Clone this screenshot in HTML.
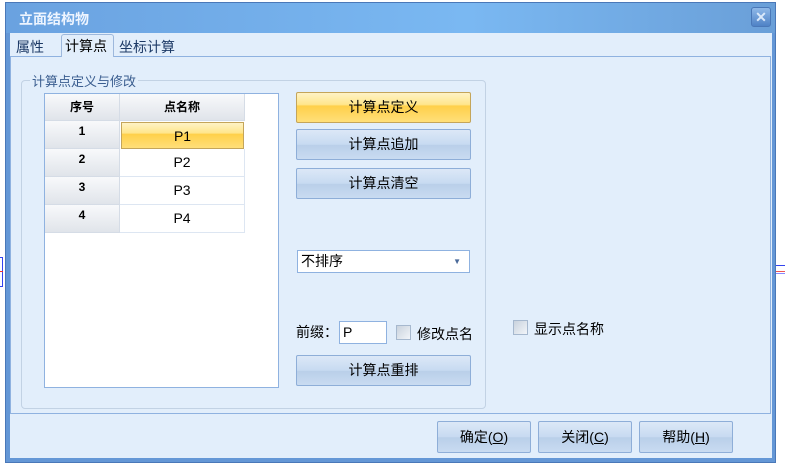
<!DOCTYPE html>
<html><head><meta charset="utf-8"><style>
*{margin:0;padding:0;box-sizing:border-box}
body{width:785px;height:465px;background:#fff;position:relative;overflow:hidden;font-family:"Liberation Sans","Noto Sans CJK SC",sans-serif;font-size:14px;color:#000}
.a{position:absolute}
.win{left:5px;top:2px;width:771px;height:461px;border:1px solid #4a78b8;background:#6497d6}
.title{left:6px;top:3px;width:769px;height:30px;background:linear-gradient(90deg,#6aa2e0,#7ab8f2 60%,#6a9fd8);color:#eef5ff;font-weight:bold;font-size:14px;padding:6px 0 0 13px}
.client{left:10px;top:33px;width:762px;height:425px;background:#e2eefb}
.btn{border:1px solid #8eaed8;border-radius:2px;background:linear-gradient(#dce8f7,#c7daf1 50%,#b9cfe9 52%,#c9dbf1);text-align:center;font-size:14px}
.btny{border-color:#c4a55a;background:linear-gradient(#fff3c6,#ffe68c 40%,#ffd04a 45%,#ffdf7a)}
.hd{background:linear-gradient(#f8f9fb,#e0e4ea);border-right:1px solid #d5dce6;border-bottom:1px solid #d5dce6;font-weight:bold;font-size:12px;text-align:center}
.cell{background:#fff;border-right:1px solid #dde6f2;border-bottom:1px solid #dde6f2;text-align:center;font-size:14px}
.cb{width:15px;height:15px;border:1px solid #a6b8ce;background:linear-gradient(135deg,#c9d2dd,#f2f5f9)}
</style></head><body>
<div class="a" style="left:0;top:257px;width:3px;height:30px;border:1px solid #3344ee;border-left:none"></div>
<div class="a" style="left:0;top:271px;width:3px;height:1px;background:#e33"></div>
<div class="a" style="left:776px;top:265px;width:9px;height:1px;background:#3344ee"></div>
<div class="a" style="left:776px;top:271px;width:9px;height:1px;background:#e55"></div>
<div class="a" style="left:776px;top:273px;width:9px;height:1px;background:#88f"></div>
<div class="a win"></div>
<div class="a title">立面结构物</div>
<div class="a" style="left:751px;top:7px;width:20px;height:20px;border-radius:3px;background:linear-gradient(#8fb8e8,#4f82c6);border:1px solid #4a78b8;color:#dbe9fa;font-weight:bold;font-size:14px;text-align:center;line-height:18px">✕</div>
<div class="a client"></div>
<div class="a" style="left:10px;top:56px;width:761px;height:358px;border:1px solid #8fb2e0;background:#e2eefb"></div>
<div class="a" style="left:16px;top:37px;font-size:14px;color:#1d3a66">属性</div>
<div class="a" style="left:61px;top:34px;width:53px;height:23px;border:1px solid #9db8dc;border-bottom:none;border-radius:3px 3px 0 0;background:#e2eefb"></div>
<div class="a" style="left:65px;top:36px;font-size:14px">计算点</div>
<div class="a" style="left:119px;top:37px;font-size:14px;color:#1d3a66">坐标计算</div>
<div class="a" style="left:21px;top:80px;width:465px;height:329px;border:1px solid #c2d2e4;border-radius:4px"></div>
<div class="a" style="left:30px;top:71px;padding:0 2px;background:#e2eefb;color:#3a5d8f;font-size:13px">计算点定义与修改</div>
<div class="a" style="left:44px;top:93px;width:235px;height:295px;border:1px solid #8fb2e0;background:#fff"></div>
<div class="a hd" style="left:45px;top:94px;width:75px;height:27px;line-height:26px">序号</div>
<div class="a hd" style="left:120px;top:94px;width:125px;height:27px;line-height:26px">点名称</div>
<div class="a hd" style="left:45px;top:121px;width:75px;height:28px;line-height:20px">1</div>
<div class="a btny" style="left:121px;top:122px;width:123px;height:27px;line-height:26px;border:1px solid #c4a55a;text-align:center">P1</div>
<div class="a hd" style="left:45px;top:149px;width:75px;height:28px;line-height:20px">2</div>
<div class="a cell" style="left:120px;top:149px;width:125px;height:28px;line-height:26px">P2</div>
<div class="a hd" style="left:45px;top:177px;width:75px;height:28px;line-height:20px">3</div>
<div class="a cell" style="left:120px;top:177px;width:125px;height:28px;line-height:26px">P3</div>
<div class="a hd" style="left:45px;top:205px;width:75px;height:28px;line-height:20px">4</div>
<div class="a cell" style="left:120px;top:205px;width:125px;height:28px;line-height:26px">P4</div>
<div class="a btn btny" style="left:296px;top:92px;width:175px;height:31px;line-height:29px">计算点定义</div>
<div class="a btn" style="left:296px;top:129px;width:175px;height:31px;line-height:29px">计算点追加</div>
<div class="a btn" style="left:296px;top:168px;width:175px;height:31px;line-height:29px">计算点清空</div>
<div class="a" style="left:297px;top:250px;width:173px;height:23px;border:1px solid #8fb2e0;background:#fff;padding-left:3px;line-height:21px;font-size:14px">不排序<span style="position:absolute;right:8px;top:0;font-size:8px;color:#4a6a9a">▼</span></div>
<div class="a" style="left:296px;top:322px;font-size:14px">前缀：</div>
<div class="a" style="left:339px;top:321px;width:48px;height:23px;border:1px solid #8fb2e0;background:#fff;padding-left:3px;line-height:21px">P</div>
<div class="a cb" style="left:396px;top:325px"></div>
<div class="a" style="left:417px;top:324px">修改点名</div>
<div class="a btn" style="left:296px;top:355px;width:175px;height:31px;line-height:29px">计算点重排</div>
<div class="a cb" style="left:513px;top:320px"></div>
<div class="a" style="left:534px;top:319px">显示点名称</div>
<div class="a btn" style="left:437px;top:421px;width:94px;height:32px;line-height:30px">确定(<u>O</u>)</div>
<div class="a btn" style="left:538px;top:421px;width:94px;height:32px;line-height:30px">关闭(<u>C</u>)</div>
<div class="a btn" style="left:639px;top:421px;width:94px;height:32px;line-height:30px">帮助(<u>H</u>)</div>
</body></html>
